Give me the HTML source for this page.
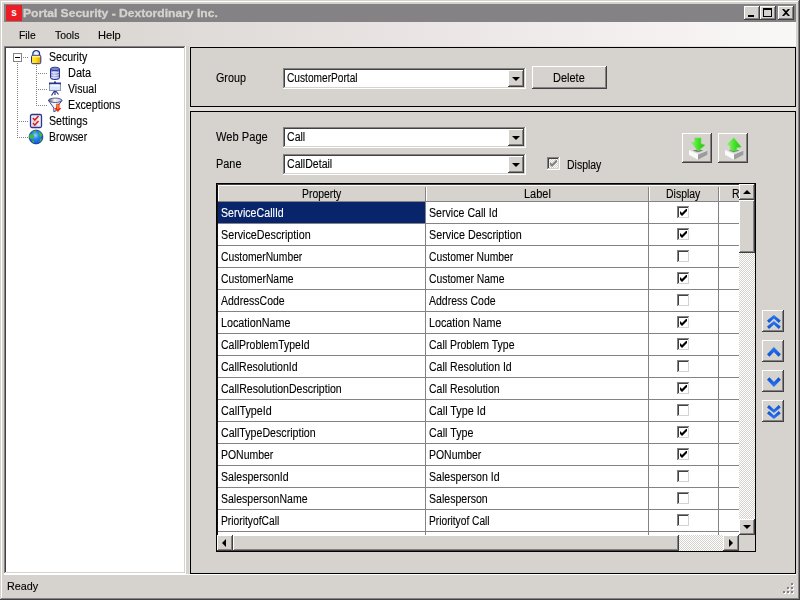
<!DOCTYPE html>
<html>
<head>
<meta charset="utf-8">
<title>Portal Security - Dextordinary Inc.</title>
<style>
html,body{margin:0;padding:0;}
body{width:800px;height:600px;overflow:hidden;background:#d6d3ce;position:relative;
 font-family:"Liberation Sans",sans-serif;font-size:11px;color:#000;line-height:13px;}
.a{position:absolute;box-sizing:border-box;}
.t{position:absolute;white-space:nowrap;line-height:13px;height:13px;}
.raised{background:#d6d3ce;box-shadow:inset -1px -1px #424142,inset 1px 1px #fff,inset -2px -2px #848284,inset 2px 2px #d6d3ce;}
.sunken{background:#fff;box-shadow:inset -1px -1px #fff,inset 1px 1px #848284,inset -2px -2px #d6d3ce,inset 2px 2px #424142;}
.dither{background:repeating-conic-gradient(#fff 0 25%,#d6d3ce 0 50%) 0 0/2px 2px;}
.panel{border:1px solid #000;background:#d6d3ce;}
/* window frame */
#frame{left:0;top:0;width:800px;height:600px;box-shadow:inset -1px -1px #424142,inset 1px 1px #d6d3ce,inset -2px -2px #848284,inset 2px 2px #fff;}
#title{left:4px;top:4px;width:792px;height:18px;background:#848284;}
#title .t{left:20px;top:3px;color:#d6d3ce;font-weight:bold;font-size:11px;}
#appicon{left:2px;top:1px;width:16px;height:16px;background:#ed1c24;}
#appicon span{position:absolute;left:0;top:1px;width:16px;text-align:center;color:#fff;font-weight:bold;font-size:10px;line-height:13px;}
.wb{top:2px;width:16px;height:14px;}
#menubar{left:4px;top:22px;width:792px;height:24px;background:linear-gradient(to right,#d6d3ce 0,#e9e4e3 50%,#faf7f7 100%);}
#menubar .t{top:6px;}
/* tree */
#tree{left:4px;top:46px;width:182px;height:528px;background:#fff;box-shadow:inset -1px -1px #fff,inset 1px 1px #848284,inset -2px -2px #d6d3ce,inset 2px 2px #424142;}
.hd{position:absolute;height:1px;background:linear-gradient(to right,#848284 50%,#fff 50%) 0 0/2px 1px;}
.vd{position:absolute;width:1px;background:linear-gradient(to bottom,#848284 50%,#fff 50%) 0 0/1px 2px;}
/* right */
#rightbg{left:189px;top:46px;width:607px;height:528px;background:#e3e0db;}
/* grid */
#grid{left:216px;top:183px;width:540px;height:369px;border:1px solid #000;background:#fff;overflow:hidden;}
.row{position:absolute;left:1px;width:521px;height:22px;box-sizing:border-box;border-bottom:1px solid #848284;}
.c{position:absolute;top:0;height:21px;box-sizing:border-box;border-right:1px solid #848284;line-height:21px;padding-left:4px;white-space:nowrap;overflow:hidden;}
.c1{left:0;width:208px;}
.c2{left:208px;width:223px;}
.c3{left:431px;width:70px;}
.c4{left:501px;width:30px;}
.sel{background:#08246b;color:#fff;}
.cb{position:absolute;left:28px;top:4px;width:13px;height:13px;box-sizing:border-box;background:#fff;box-shadow:inset -1px -1px #fff,inset 1px 1px #848284,inset -2px -2px #d6d3ce,inset 2px 2px #424142;}
.cb svg{position:absolute;left:3px;top:3px;}
.dd{right:2px;top:2px;width:16px;height:17px;}
.dd i{position:absolute;left:4px;top:7px;width:0;height:0;border-left:4px solid transparent;border-right:4px solid transparent;border-top:4px solid #000;}
.mv{width:22px;height:22px;}
.ar{position:absolute;width:0;height:0;border:4px solid transparent;}
.ar.up{left:4px;top:1px;border-bottom-color:#000;border-top-width:0;left:4px;top:6px;}
.ar.dn{left:4px;top:6px;border-top-color:#000;border-bottom-width:0;}
.ar.lf{left:5px;top:4px;border-right-color:#000;border-left-width:0;}
.ar.rt{left:6px;top:4px;border-left-color:#000;border-right-width:0;}
.x{position:absolute;white-space:nowrap;transform-origin:0 0;}
#texts{will-change:transform;}
.x{-webkit-text-stroke:0.12px currentColor;}
.ms{font-size:12.5px;line-height:14px;height:14px;}
.th{font-size:11px;line-height:12px;height:12px;}
</style>
</head>
<body>
<div class="a" id="frame"></div>
<div class="a" id="title">
  <div class="a" id="appicon"><span>s</span></div>
  
  <div class="a wb raised" style="left:740px"><div class="a" style="left:4px;top:9px;width:6px;height:2px;background:#000"></div></div>
  <div class="a wb raised" style="left:756px"><div class="a" style="left:3px;top:2px;width:9px;height:9px;border:1px solid #000;border-top-width:2px"></div></div>
  <div class="a wb raised" style="left:774px"><svg class="a" style="left:4px;top:3px" width="8" height="7" viewBox="0 0 8 7"><path d="M0 0h2l2 2 2-2h2L5 3.5 8 7H6L4 5 2 7H0l3-3.500z" fill="#000"/></svg></div>
</div>
<div class="a" id="menubar">
  
  
  
</div>

<div class="a" id="rightbg"></div>
<div class="a" id="tree">
<!-- coordinates relative to tree at (4,46) -->
<div class="vd" style="left:13px;top:17px;height:75px"></div>
<div class="hd" style="left:19px;top:11px;width:6px"></div>
<div class="hd" style="left:13px;top:75px;width:12px"></div>
<div class="hd" style="left:13px;top:91px;width:12px"></div>
<div class="vd" style="left:32px;top:19px;height:41px"></div>
<div class="hd" style="left:34px;top:27px;width:10px"></div>
<div class="hd" style="left:34px;top:43px;width:10px"></div>
<div class="hd" style="left:34px;top:59px;width:10px"></div>
<div class="a" style="left:9px;top:7px;width:9px;height:9px;border:1px solid #848284;background:#fff"><div class="a" style="left:1px;top:3px;width:5px;height:1px;background:#000"></div></div>
<svg class="a" style="left:24px;top:3px" width="16" height="16" viewBox="0 0 16 16">
 <defs><linearGradient id="lk" x1="0" x2="1"><stop offset="0" stop-color="#ffe93a"/><stop offset=".45" stop-color="#ffdf10"/><stop offset="1" stop-color="#e79a00"/></linearGradient></defs>
 <path d="M4.900 7V4.900a3.300 3.300 0 0 1 6.600 0V7" fill="none" stroke="#26318f" stroke-width="1.400"/>
 <path d="M6 7V5a2.200 2.200 0 0 1 4.400 0V7" fill="none" stroke="#c9cde8" stroke-width=".8"/>
 <rect x="3.500" y="6.300" width="9.300" height="8.400" rx="1.300" fill="url(#lk)" stroke="#26318f" stroke-width="1"/>
 <rect x="4.300" y="6.900" width="7.700" height="1.500" fill="#fff38a"/>
</svg>

<svg class="a" style="left:43px;top:19px" width="16" height="16" viewBox="0 0 16 16">
 <defs><linearGradient id="db" x1="0" x2="1"><stop offset="0" stop-color="#6a74c4"/><stop offset=".4" stop-color="#c4caf2"/><stop offset="1" stop-color="#6870c0"/></linearGradient></defs>
 <path d="M3.500 4v8.700c0 1.100 2 1.800 4.500 1.800s4.500-.7 4.500-1.800V4z" fill="url(#db)" stroke="#27318c" stroke-width="1"/>
 <ellipse cx="8" cy="3.900" rx="4.500" ry="1.700" fill="#7c86cc" stroke="#27318c" stroke-width=".9"/>
 <path d="M4.300 7.300c1.800.8 5.600.8 7.400 0M4.300 9.800c1.800.8 5.600.8 7.400 0M4.300 12.300c1.800.8 5.600.8 7.400 0" fill="none" stroke="#e6e9fc" stroke-width="1"/>
</svg>

<svg class="a" style="left:43px;top:35px" width="16" height="16" viewBox="0 0 16 16">
 <path d="M8 9l-3.500 5.500M8 9l3.500 4.500M8 9v5" stroke="#2b3690" stroke-width="1.200" fill="none"/>
 <rect x="2.500" y="2.500" width="11" height="7" fill="#d6e8fb" stroke="#8c94b8" stroke-width="1"/>
 <rect x="2" y="1.500" width="12" height="1.800" fill="#2b3690"/>
 <rect x="7" y=".5" width="2" height="1.500" fill="#2b3690"/>
 <rect x="3.500" y="3.500" width="9" height="2" fill="#f4f9ff"/>
</svg>

<svg class="a" style="left:43px;top:51px" width="16" height="16" viewBox="0 0 16 16">
 <defs><linearGradient id="fn" x1="0" x2="1"><stop offset="0" stop-color="#5a5a5a"/><stop offset=".45" stop-color="#f6f6f6"/><stop offset="1" stop-color="#bdbdbd"/></linearGradient></defs>
 <path d="M1.500 3.500L6.800 11v3.700l2.400-1V11L15 3.500z" fill="#f2f2f2" stroke="#2b3690" stroke-width=".9"/>
 <ellipse cx="8.200" cy="3.300" rx="6.700" ry="2.200" fill="url(#fn)" stroke="#2b3690" stroke-width=".8"/>
 <path d="M9.300 6.800h3.200v4.300h2L10.900 15 7.100 11.100h2.200z" fill="#ee2e0c"/>
 <path d="M10.200 7.400h1.300v4.600h-1.300z" fill="#ff9a2e"/>
</svg>

<svg class="a" style="left:24px;top:67px" width="16" height="16" viewBox="0 0 16 16">
 <rect x="2.500" y="1.500" width="11" height="13" rx="1.500" fill="#ececf2" stroke="#2b3690" stroke-width="1.300"/>
 <rect x="5" y="5.500" width="3" height="3" fill="#fff" stroke="#b8b8c8" stroke-width=".6"/>
 <rect x="5" y="10" width="3" height="3" fill="#fff" stroke="#b8b8c8" stroke-width=".6"/>
 <path d="M5 5l1.800 2.200L10.500 3M5 10l1.800 2.200L10.500 8" fill="none" stroke="#e01818" stroke-width="1.500"/>
</svg>

<svg class="a" style="left:24px;top:83px" width="16" height="16" viewBox="0 0 16 16">
 <defs><radialGradient id="gl" cx=".45" cy=".38" r=".65"><stop offset="0" stop-color="#9fd0ff"/><stop offset=".4" stop-color="#2a86f0"/><stop offset="1" stop-color="#0b54c8"/></radialGradient></defs>
 <circle cx="8" cy="8" r="6.900" fill="url(#gl)" stroke="#1c2f8c" stroke-width=".8"/>
 <path d="M1.700 6c1.200-.8 3-.6 4.200.2.900.8.400 2.600-.6 3.200-1.200.6-2.800.3-3.900-.6C1.100 8 1.200 6.800 1.700 6zM5 2.300c1.200-.9 2.400-1.100 3.300-.7-.1 1.300-.9 2.300-2.100 2.200C5.600 3.500 5.200 3 5 2.300zM10.800 2.500c1.500.6 3.100 2.200 3.600 4-.9-.2-1.500.7-1.900 1.900-1-.7-1.500-2.100-1-3.300-.7-.7-.9-1.700-.7-2.600zM12.900 9.200c.6.300 1 1 .6 1.900-.5.900-1.200 1.800-2 2 .2-1.400.6-2.800 1.400-3.900zM4.600 11.300c1 .3 1.700 1.200 1.600 2.400-.9-.2-1.700-1-2.100-1.800z" fill="#3fc02e"/>
</svg>

</div>

<div class="a panel" id="p1" style="left:190px;top:47px;width:606px;height:60px"></div>
<div class="a panel" id="p2" style="left:190px;top:111px;width:606px;height:463px"></div>

<!-- panel 1 controls -->

<div class="a sunken combo" style="left:283px;top:68px;width:243px;height:21px"><div class="a raised dd"><i></i></div></div>
<div class="a raised" style="left:532px;top:66px;width:75px;height:23px;text-align:center;line-height:22px"></div>
<!-- panel 2 controls -->

<div class="a sunken combo" style="left:283px;top:127px;width:243px;height:21px"><div class="a raised dd"><i></i></div></div>

<div class="a sunken combo" style="left:283px;top:154px;width:243px;height:21px"><div class="a raised dd"><i></i></div></div>
<div class="a cb" style="left:547px;top:157px;background:repeating-conic-gradient(#fff 0 25%,#d6d3ce 0 50%) 0 0/2px 2px"><svg width="7" height="7" viewBox="0 0 7 7"><path d="M0 2v3l2 2 5-5V-1L2 4z" fill="#848284"/></svg></div>

<div class="a raised" id="bdown" style="left:682px;top:133px;width:30px;height:30px"><svg class="a" style="left:0;top:0" width="30" height="30" viewBox="0 0 30 30"><defs><linearGradient id="gr" x1="0" x2="1"><stop offset="0" stop-color="#8af46a"/><stop offset=".5" stop-color="#46e02c"/><stop offset="1" stop-color="#22c010"/></linearGradient></defs><path d="M7 17.300L16 15l9.300 2.300L16 21.300z" fill="#d9d9d9"/>
<path d="M10.500 17.500L16 16.200l5.500 1.300L16 19.300z" fill="#7e7e7e"/>
<path d="M7 17.300L16 21.300v5.400L7 21.700z" fill="#fbfbfb"/>
<path d="M16 21.300l9.300-4v4.400L16 26.700z" fill="#9c9c9c"/>
<path d="M7 17.300L16 21.300l9.300-4" fill="none" stroke="#f4f4f4" stroke-width=".6"/><path d="M12.700 5H19v5.700l4 1.300L16 18.300 9.700 9.300l3 .7z" fill="url(#gr)" stroke="#5fe645" stroke-width=".5"/></svg></div>
<div class="a raised" id="bup" style="left:718px;top:133px;width:30px;height:30px"><svg class="a" style="left:0;top:0" width="30" height="30" viewBox="0 0 30 30"><path d="M7 17.300L16 15l9.300 2.300L16 21.300z" fill="#d9d9d9"/>
<path d="M10.500 17.500L16 16.200l5.500 1.300L16 19.300z" fill="#7e7e7e"/>
<path d="M7 17.300L16 21.300v5.400L7 21.700z" fill="#fbfbfb"/>
<path d="M16 21.300l9.300-4v4.400L16 26.700z" fill="#9c9c9c"/>
<path d="M7 17.300L16 21.300l9.300-4" fill="none" stroke="#f4f4f4" stroke-width=".6"/><path d="M15.700 4.800L23.300 14l-4.600.700v3.600L12.300 17.300V13l-2.600-1.700z" fill="url(#gr)" stroke="#5fe645" stroke-width=".5"/></svg></div>
<div class="a raised mv" style="left:762px;top:310px"><svg class="a" style="left:0;top:0" width="22" height="22" viewBox="0 0 22 22"><defs><linearGradient id="bl" x1="0" x2="0" y1="0" y2="1"><stop offset="0" stop-color="#2a7cf6"/><stop offset="1" stop-color="#0b4fd2"/></linearGradient></defs><g fill="url(#bl)"><path d="M5.00 10.50L11.90 5.00L18.75 10.50L16.80 12.90L11.90 8.40L7.00 12.90z"/><path d="M5.00 16.60L11.90 11.10L18.75 16.60L16.80 19.00L11.90 14.50L7.00 19.00z"/></g></svg></div>
<div class="a raised mv" style="left:762px;top:340px"><svg class="a" style="left:0;top:0" width="22" height="22" viewBox="0 0 22 22"><g fill="url(#bl)"><path d="M5.00 14.25L11.90 7.00L18.90 14.25L16.50 16.75L11.90 12.00L7.40 16.75z"/></g></svg></div>
<div class="a raised mv" style="left:762px;top:370px"><svg class="a" style="left:0;top:0" width="22" height="22" viewBox="0 0 22 22"><g transform="translate(0,24) scale(1,-1)" fill="url(#bl)"><path d="M5.00 14.25L11.90 7.00L18.90 14.25L16.50 16.75L11.90 12.00L7.40 16.75z"/></g></svg></div>
<div class="a raised mv" style="left:762px;top:400px"><svg class="a" style="left:0;top:0" width="22" height="22" viewBox="0 0 22 22"><g transform="translate(0,24) scale(1,-1)" fill="url(#bl)"><path d="M5.00 10.50L11.90 5.00L18.75 10.50L16.80 12.90L11.90 8.40L7.00 12.90z"/><path d="M5.00 16.60L11.90 11.10L18.75 16.60L16.80 19.00L11.90 14.50L7.00 19.00z"/></g></svg></div>
<div class="a" id="grid">
<div class="a" style="left:1px;top:1px;width:521px;height:17px;background:#d6d3ce;border-top:1px solid #fff;border-bottom:1px solid #848284"></div>
<div class="a" style="left:208px;top:3px;width:2px;height:14px;background:linear-gradient(to right,#848284 50%,#fff 50%)"></div>
<div class="a" style="left:431px;top:3px;width:2px;height:14px;background:linear-gradient(to right,#848284 50%,#fff 50%)"></div>
<div class="a" style="left:501px;top:3px;width:2px;height:14px;background:linear-gradient(to right,#848284 50%,#fff 50%)"></div>
<div class="a" style="left:1px;top:2px;width:1px;height:15px;background:#fff"></div>
<div class="row" style="top:18px"><div class="c c1 sel"></div><div class="c c2"></div><div class="c c3"><div class="cb"><svg width="7" height="7" viewBox="0 0 7 7"><path d="M0 2v3l2 2 5-5V-1L2 4z" fill="#000"/></svg></div></div><div class="c c4"></div></div>
<div class="row" style="top:40px"><div class="c c1"></div><div class="c c2"></div><div class="c c3"><div class="cb"><svg width="7" height="7" viewBox="0 0 7 7"><path d="M0 2v3l2 2 5-5V-1L2 4z" fill="#000"/></svg></div></div><div class="c c4"></div></div>
<div class="row" style="top:62px"><div class="c c1"></div><div class="c c2"></div><div class="c c3"><div class="cb"></div></div><div class="c c4"></div></div>
<div class="row" style="top:84px"><div class="c c1"></div><div class="c c2"></div><div class="c c3"><div class="cb"><svg width="7" height="7" viewBox="0 0 7 7"><path d="M0 2v3l2 2 5-5V-1L2 4z" fill="#000"/></svg></div></div><div class="c c4"></div></div>
<div class="row" style="top:106px"><div class="c c1"></div><div class="c c2"></div><div class="c c3"><div class="cb"></div></div><div class="c c4"></div></div>
<div class="row" style="top:128px"><div class="c c1"></div><div class="c c2"></div><div class="c c3"><div class="cb"><svg width="7" height="7" viewBox="0 0 7 7"><path d="M0 2v3l2 2 5-5V-1L2 4z" fill="#000"/></svg></div></div><div class="c c4"></div></div>
<div class="row" style="top:150px"><div class="c c1"></div><div class="c c2"></div><div class="c c3"><div class="cb"><svg width="7" height="7" viewBox="0 0 7 7"><path d="M0 2v3l2 2 5-5V-1L2 4z" fill="#000"/></svg></div></div><div class="c c4"></div></div>
<div class="row" style="top:172px"><div class="c c1"></div><div class="c c2"></div><div class="c c3"><div class="cb"></div></div><div class="c c4"></div></div>
<div class="row" style="top:194px"><div class="c c1"></div><div class="c c2"></div><div class="c c3"><div class="cb"><svg width="7" height="7" viewBox="0 0 7 7"><path d="M0 2v3l2 2 5-5V-1L2 4z" fill="#000"/></svg></div></div><div class="c c4"></div></div>
<div class="row" style="top:216px"><div class="c c1"></div><div class="c c2"></div><div class="c c3"><div class="cb"></div></div><div class="c c4"></div></div>
<div class="row" style="top:238px"><div class="c c1"></div><div class="c c2"></div><div class="c c3"><div class="cb"><svg width="7" height="7" viewBox="0 0 7 7"><path d="M0 2v3l2 2 5-5V-1L2 4z" fill="#000"/></svg></div></div><div class="c c4"></div></div>
<div class="row" style="top:260px"><div class="c c1"></div><div class="c c2"></div><div class="c c3"><div class="cb"><svg width="7" height="7" viewBox="0 0 7 7"><path d="M0 2v3l2 2 5-5V-1L2 4z" fill="#000"/></svg></div></div><div class="c c4"></div></div>
<div class="row" style="top:282px"><div class="c c1"></div><div class="c c2"></div><div class="c c3"><div class="cb"></div></div><div class="c c4"></div></div>
<div class="row" style="top:304px"><div class="c c1"></div><div class="c c2"></div><div class="c c3"><div class="cb"></div></div><div class="c c4"></div></div>
<div class="row" style="top:326px"><div class="c c1"></div><div class="c c2"></div><div class="c c3"><div class="cb"></div></div><div class="c c4"></div></div>
<div class="row" style="top:348px"><div class="c c1"></div><div class="c c2"></div><div class="c c3"></div><div class="c c4"></div></div>
<div class="a" style="left:0;top:0;width:1px;height:351px;background:#101010"></div>
<div class="a" style="left:0;top:0;width:522px;height:1px;background:#424142"></div>
<div class="a dither" style="left:522px;top:0;width:16px;height:351px"></div>
<div class="a raised" style="left:522px;top:0;width:16px;height:16px"><i class="ar up"></i></div>
<div class="a raised" style="left:522px;top:16px;width:16px;height:53px"></div>
<div class="a raised" style="left:522px;top:335px;width:16px;height:16px"><i class="ar dn"></i></div>
<div class="a dither" style="left:0;top:351px;width:522px;height:16px"></div>
<div class="a raised" style="left:0;top:351px;width:16px;height:16px"><i class="ar lf"></i></div>
<div class="a raised" style="left:16px;top:351px;width:446px;height:16px"></div>
<div class="a raised" style="left:506px;top:351px;width:16px;height:16px"><i class="ar rt"></i></div>
<div class="a" style="left:522px;top:351px;width:16px;height:16px;background:#d6d3ce"></div>
</div>

<div class="a" id="status" style="left:4px;top:574px;width:792px;height:22px;background:#d6d3ce;border-top:1px solid #fff"><div class="a" style="left:788px;top:9px;width:2px;height:2px;background:#fff"></div><div class="a" style="left:787px;top:8px;width:2px;height:2px;background:#848284"></div><div class="a" style="left:784px;top:13px;width:2px;height:2px;background:#fff"></div><div class="a" style="left:783px;top:12px;width:2px;height:2px;background:#848284"></div><div class="a" style="left:788px;top:13px;width:2px;height:2px;background:#fff"></div><div class="a" style="left:787px;top:12px;width:2px;height:2px;background:#848284"></div><div class="a" style="left:780px;top:17px;width:2px;height:2px;background:#fff"></div><div class="a" style="left:779px;top:16px;width:2px;height:2px;background:#848284"></div><div class="a" style="left:784px;top:17px;width:2px;height:2px;background:#fff"></div><div class="a" style="left:783px;top:16px;width:2px;height:2px;background:#848284"></div><div class="a" style="left:788px;top:17px;width:2px;height:2px;background:#fff"></div><div class="a" style="left:787px;top:16px;width:2px;height:2px;background:#848284"></div>
  
</div>
<div class="a" id="texts" style="left:0;top:0;width:800px;height:600px;pointer-events:none">
<div id="t0" class="x th" style="left:23.00px;top:7.00px;color:#d6d3ce;transform:scaleX(1.0986);font-weight:bold;-webkit-text-stroke:0.3px currentColor;">Portal Security - Dextordinary Inc.</div>
<div id="t1" class="x th" style="left:19.00px;top:29.00px;color:#000;transform:scaleX(0.9386);">File</div>
<div id="t2" class="x th" style="left:55.00px;top:29.00px;color:#000;transform:scaleX(0.9504);">Tools</div>
<div id="t3" class="x th" style="left:97.50px;top:29.00px;color:#000;transform:scaleX(1.0072);">Help</div>
<div id="t4" class="x th" style="left:7.00px;top:580.00px;color:#000;transform:scaleX(0.9824);">Ready</div>
<div id="t5" class="x ms" style="left:49.00px;top:50.00px;color:#000;transform:scaleX(0.8457);">Security</div>
<div id="t6" class="x ms" style="left:68.00px;top:66.00px;color:#000;transform:scaleX(0.8793);">Data</div>
<div id="t7" class="x ms" style="left:68.00px;top:82.00px;color:#000;transform:scaleX(0.8436);">Visual</div>
<div id="t8" class="x ms" style="left:68.00px;top:98.00px;color:#000;transform:scaleX(0.8577);">Exceptions</div>
<div id="t9" class="x ms" style="left:49.00px;top:114.00px;color:#000;transform:scaleX(0.8523);">Settings</div>
<div id="t10" class="x ms" style="left:49.00px;top:130.00px;color:#000;transform:scaleX(0.8308);">Browser</div>
<div id="t11" class="x ms" style="left:216.00px;top:71.00px;color:#000;transform:scaleX(0.8600);">Group</div>
<div id="t12" class="x ms" style="left:287.00px;top:71.00px;color:#000;transform:scaleX(0.8131);">CustomerPortal</div>
<div id="t13" class="x ms" style="left:553.00px;top:71.00px;color:#000;transform:scaleX(0.8796);">Delete</div>
<div id="t14" class="x ms" style="left:216.00px;top:130.00px;color:#000;transform:scaleX(0.8908);">Web Page</div>
<div id="t15" class="x ms" style="left:287.00px;top:130.00px;color:#000;transform:scaleX(0.8452);">Call</div>
<div id="t16" class="x ms" style="left:216.00px;top:157.00px;color:#000;transform:scaleX(0.8725);">Pane</div>
<div id="t17" class="x ms" style="left:287.00px;top:157.00px;color:#000;transform:scaleX(0.8453);">CallDetail</div>
<div id="t18" class="x ms" style="left:567.00px;top:158.00px;color:#000;transform:scaleX(0.8383);">Display</div>
<div id="t19" class="x ms" style="left:302.00px;top:187.00px;color:#000;transform:scaleX(0.8315);">Property</div>
<div id="t20" class="x ms" style="left:523.50px;top:187.00px;color:#000;transform:scaleX(0.8775);">Label</div>
<div id="t21" class="x ms" style="left:666.00px;top:187.00px;color:#000;transform:scaleX(0.8383);">Display</div>
<div class="a" style="left:728px;top:187.00px;width:11px;height:14px;overflow:hidden"><div id="t22" class="x ms" style="left:4.00px;top:0.00px;color:#000;transform:scaleX(0.8500);">R</div></div>
<div id="t23" class="x ms" style="left:221.00px;top:206.00px;color:#fff;transform:scaleX(0.8526);">ServiceCallId</div>
<div id="t24" class="x ms" style="left:429.00px;top:206.00px;color:#000;transform:scaleX(0.8506);">Service Call Id</div>
<div id="t25" class="x ms" style="left:221.00px;top:228.00px;color:#000;transform:scaleX(0.8600);">ServiceDescription</div>
<div id="t26" class="x ms" style="left:429.00px;top:228.00px;color:#000;transform:scaleX(0.8610);">Service Description</div>
<div id="t27" class="x ms" style="left:221.00px;top:250.00px;color:#000;transform:scaleX(0.8241);">CustomerNumber</div>
<div id="t28" class="x ms" style="left:429.00px;top:250.00px;color:#000;transform:scaleX(0.8252);">Customer Number</div>
<div id="t29" class="x ms" style="left:221.00px;top:272.00px;color:#000;transform:scaleX(0.8285);">CustomerName</div>
<div id="t30" class="x ms" style="left:429.00px;top:272.00px;color:#000;transform:scaleX(0.8296);">Customer Name</div>
<div id="t31" class="x ms" style="left:221.00px;top:294.00px;color:#000;transform:scaleX(0.8409);">AddressCode</div>
<div id="t32" class="x ms" style="left:429.00px;top:294.00px;color:#000;transform:scaleX(0.8418);">Address Code</div>
<div id="t33" class="x ms" style="left:221.00px;top:316.00px;color:#000;transform:scaleX(0.8620);">LocationName</div>
<div id="t34" class="x ms" style="left:429.00px;top:316.00px;color:#000;transform:scaleX(0.8619);">Location Name</div>
<div id="t35" class="x ms" style="left:221.00px;top:338.00px;color:#000;transform:scaleX(0.8397);">CallProblemTypeId</div>
<div id="t36" class="x ms" style="left:429.00px;top:338.00px;color:#000;transform:scaleX(0.8391);">Call Problem Type</div>
<div id="t37" class="x ms" style="left:221.00px;top:360.00px;color:#000;transform:scaleX(0.8415);">CallResolutionId</div>
<div id="t38" class="x ms" style="left:429.00px;top:360.00px;color:#000;transform:scaleX(0.8445);">Call Resolution Id</div>
<div id="t39" class="x ms" style="left:221.00px;top:382.00px;color:#000;transform:scaleX(0.8435);">CallResolutionDescription</div>
<div id="t40" class="x ms" style="left:429.00px;top:382.00px;color:#000;transform:scaleX(0.8391);">Call Resolution</div>
<div id="t41" class="x ms" style="left:221.00px;top:404.00px;color:#000;transform:scaleX(0.8600);">CallTypeId</div>
<div id="t42" class="x ms" style="left:429.00px;top:404.00px;color:#000;transform:scaleX(0.8619);">Call Type Id</div>
<div id="t43" class="x ms" style="left:221.00px;top:426.00px;color:#000;transform:scaleX(0.8512);">CallTypeDescription</div>
<div id="t44" class="x ms" style="left:429.00px;top:426.00px;color:#000;transform:scaleX(0.8551);">Call Type</div>
<div id="t45" class="x ms" style="left:221.00px;top:448.00px;color:#000;transform:scaleX(0.8373);">PONumber</div>
<div id="t46" class="x ms" style="left:429.00px;top:448.00px;color:#000;transform:scaleX(0.8373);">PONumber</div>
<div id="t47" class="x ms" style="left:221.00px;top:470.00px;color:#000;transform:scaleX(0.8469);">SalespersonId</div>
<div id="t48" class="x ms" style="left:429.00px;top:470.00px;color:#000;transform:scaleX(0.8473);">Salesperson Id</div>
<div id="t49" class="x ms" style="left:221.00px;top:492.00px;color:#000;transform:scaleX(0.8414);">SalespersonName</div>
<div id="t50" class="x ms" style="left:429.00px;top:492.00px;color:#000;transform:scaleX(0.8445);">Salesperson</div>
<div id="t51" class="x ms" style="left:221.00px;top:514.00px;color:#000;transform:scaleX(0.8229);">PriorityofCall</div>
<div id="t52" class="x ms" style="left:429.00px;top:514.00px;color:#000;transform:scaleX(0.8155);">Priorityof Call</div>
</div>
</body>
</html>
